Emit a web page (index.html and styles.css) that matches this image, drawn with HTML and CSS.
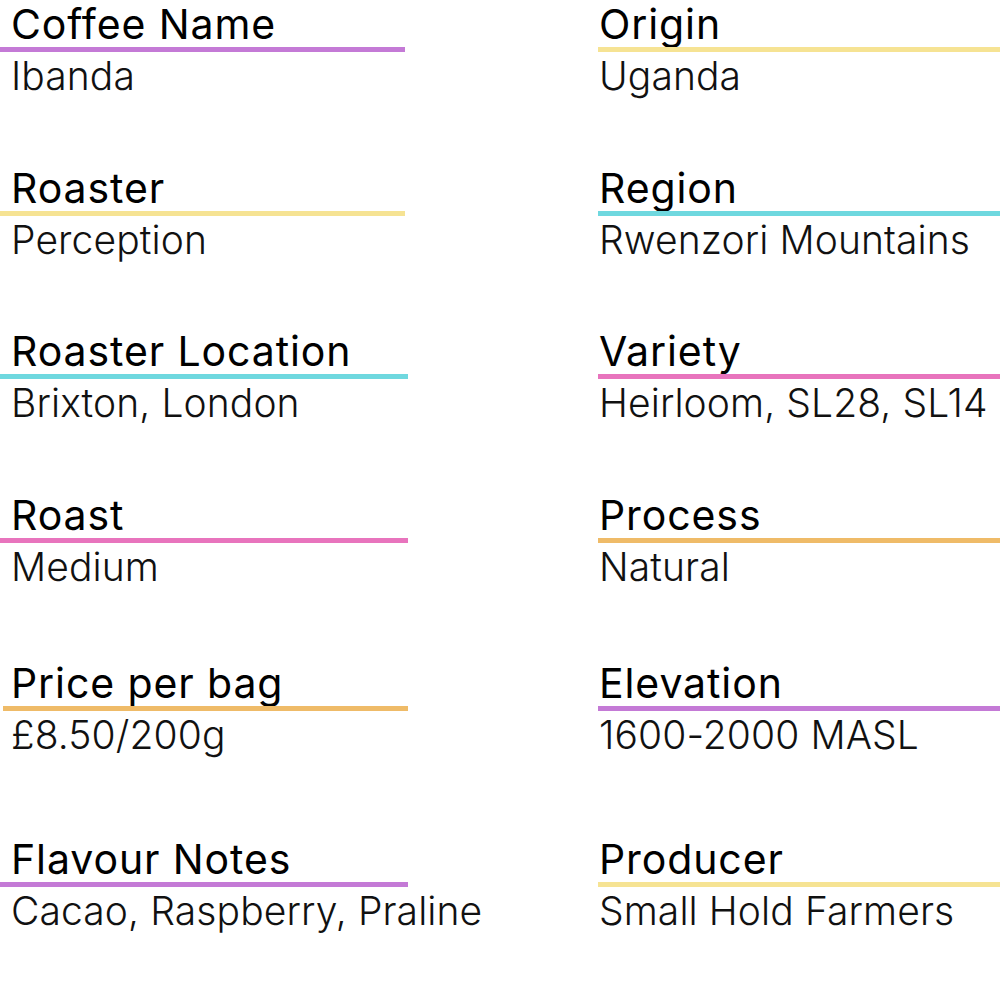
FILE: index.html
```html
<!DOCTYPE html>
<html>
<head>
<meta charset="utf-8">
<link rel="stylesheet" href="styles.css">
</head>
<body>
<main class="sheet">
  <div class="field"><div class="label">Coffee Name</div><div class="bar purple"></div><div class="value">Ibanda</div></div>
  <div class="field right"><div class="label">Origin</div><div class="bar yellow"></div><div class="value">Uganda</div></div>

  <div class="field"><div class="label">Roaster</div><div class="bar yellow"></div><div class="value">Perception</div></div>
  <div class="field right"><div class="label">Region</div><div class="bar cyan"></div><div class="value">Rwenzori Mountains</div></div>

  <div class="field"><div class="label">Roaster Location</div><div class="bar cyan wide"></div><div class="value">Brixton, London</div></div>
  <div class="field right"><div class="label">Variety</div><div class="bar pink"></div><div class="value">Heirloom, SL28, SL14</div></div>

  <div class="field"><div class="label">Roast</div><div class="bar pink wide"></div><div class="value">Medium</div></div>
  <div class="field right"><div class="label">Process</div><div class="bar orange"></div><div class="value">Natural</div></div>

  <div class="field"><div class="label">Price per bag</div><div class="bar orange wide inset"></div><div class="value">£8.50/200g</div></div>
  <div class="field right"><div class="label">Elevation</div><div class="bar purple"></div><div class="value">1600-2000 MASL</div></div>

  <div class="field"><div class="label">Flavour Notes</div><div class="bar purple wide"></div><div class="value">Cacao, Raspberry, Praline</div></div>
  <div class="field right"><div class="label">Producer</div><div class="bar yellow"></div><div class="value">Small Hold Farmers</div></div>
</main>
</body>
</html>
```

FILE: styles.css
```css
html, body {
  margin: 0;
  padding: 0;
  background: #ffffff;
}

body {
  font-family: "Inter", "Noto Sans", sans-serif;
  color: #000;
  width: 1000px;
  height: 1000px;
  overflow: hidden;
}

.sheet {
  display: grid;
  grid-template-columns: 408px 402px;
  column-gap: 190px;
  grid-template-rows: 164px 163px 164px 168px 176px auto;
  padding-top: 4px;
}

.field {
  display: flex;
  flex-direction: column;
  min-width: 0;
}

.label {
  font-size: 41px;
  font-weight: 400;
  line-height: 41px;
  padding-left: 11px;
  letter-spacing: 0.9px;
  white-space: nowrap;
}

.right .label,
.right .value {
  padding-left: 1px;
}

.bar {
  height: 5px;
  width: 405px;
  margin-top: 2px;
}

.bar.wide { width: 408px; }
.bar.inset { margin-left: 3px; width: 405px; }
.right .bar { width: 402px; }

.value {
  font-size: 39px;
  font-weight: 300;
  line-height: 48px;
  padding-left: 11px;
  letter-spacing: 0.1px;
  color: #111;
  white-space: nowrap;
}

.purple { background: #c47ad6; }
.yellow { background: #f6e393; }
.cyan { background: #6fd8df; }
.pink { background: #e874bd; }
.orange { background: #efbb68; }
```
